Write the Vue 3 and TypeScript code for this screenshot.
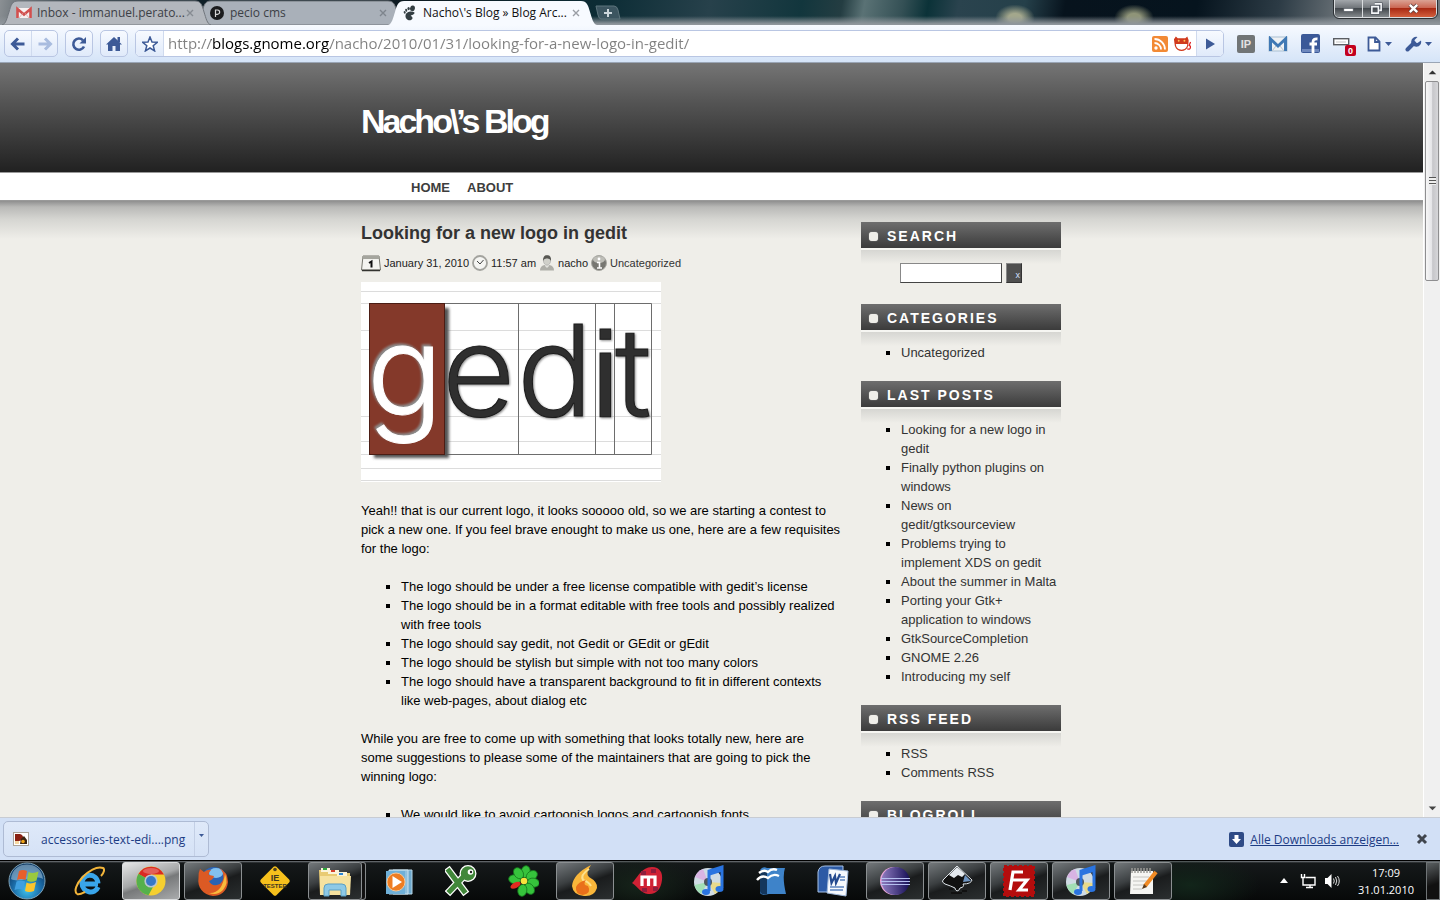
<script setup lang="ts">
import { ref } from 'vue'

interface Link { label: string }
interface Section { title: string; links: Link[] }

const address = ref('http://blogs.gnome.org/nacho/2010/01/31/looking-for-a-new-logo-in-gedit/')
const query = ref('')

const requisites: string[] = [
  'The logo should be under a free license compatible with gedit’s license',
  'The logo should be in a format editable with free tools and possibly realized with free tools',
  'The logo should say gedit, not Gedit or GEdit or gEdit',
  'The logo should be stylish but simple with not too many colors',
  'The logo should have a transparent background to fit in different contexts like web-pages, about dialog etc',
]

const toLinks = (labels: string[]): Link[] => labels.map((label) => ({ label }))

const sections: Section[] = [
  { title: 'Categories', links: toLinks(['Uncategorized']) },
  {
    title: 'Last posts',
    links: toLinks([
      'Looking for a new logo in gedit',
      'Finally python plugins on windows',
      'News on gedit/gtksourceview',
      'Problems trying to implement XDS on gedit',
      'About the summer in Malta',
      'Porting your Gtk+ application to windows',
      'GtkSourceCompletion',
      'GNOME 2.26',
      'Introducing my self',
    ]),
  },
  { title: 'RSS Feed', links: toLinks(['RSS', 'Comments RSS']) },
  { title: 'Blogroll', links: [] },
]

const guides: number[] = [9, 21, 48, 67, 134, 159, 172, 186, 198]
</script>

<template>
  <div class="desktop">
    <header class="titlebar">
      <div class="tabs" role="tablist">
        <button class="tab first" role="tab" type="button">
          <svg class="tab-shape" viewBox="0 0 209 25" preserveAspectRatio="none" aria-hidden="true">
            <path d="M0 25C4 24 5 18 7 12C9 5 10 1 16 1H193C199 1 200 5 202 12C204 18 205 24 209 25Z" fill="#b3b7bd" stroke="#71767d" />
          </svg>
          <svg class="fav" viewBox="0 0 16 16" aria-hidden="true">
            <rect x="1" y="3" width="14" height="10" fill="#f6f0f0" />
            <path d="M1.500 13V4L8 9.500L14.500 4V13" fill="none" stroke="#d2504f" stroke-width="2.600" />
            <path d="M3 13L6.500 8.500M13 13L9.500 8.500" stroke="#e3b5b5" />
          </svg>
          <span class="tab-title">Inbox - immanuel.perato...</span>
          <svg class="tab-x" viewBox="0 0 8 8" aria-hidden="true"><path d="M1 1L7 7M7 1L1 7" stroke="#868b92" stroke-width="1.400" /></svg>
        </button>
        <button class="tab" role="tab" type="button">
          <svg class="tab-shape" viewBox="0 0 209 25" preserveAspectRatio="none" aria-hidden="true">
            <path d="M0 25C4 24 5 18 7 12C9 5 10 1 16 1H193C199 1 200 5 202 12C204 18 205 24 209 25Z" fill="#a9b0b9" stroke="#71767d" />
          </svg>
          <svg class="fav" viewBox="0 0 16 16" aria-hidden="true">
            <circle cx="8" cy="8" r="7" fill="#1b1c1e" />
            <path d="M6.500 12V5H8.500A2 2 0 0 1 8.500 9.300H7" fill="none" stroke="#d5d5d5" stroke-width="1.200" />
          </svg>
          <span class="tab-title">pecio cms</span>
          <svg class="tab-x" viewBox="0 0 8 8" aria-hidden="true"><path d="M1 1L7 7M7 1L1 7" stroke="#7e858d" stroke-width="1.400" /></svg>
        </button>
        <button class="tab active" role="tab" type="button" aria-selected="true">
          <svg class="tab-shape" viewBox="0 0 209 25" preserveAspectRatio="none" aria-hidden="true">
            <path d="M0 25C4 24 5 18 7 12C9 5 10 1 16 1H193C199 1 200 5 202 12C204 18 205 24 209 25Z" fill="#f7faff" />
          </svg>
          <svg class="fav" viewBox="0 0 16 16" aria-hidden="true">
            <g fill="#333e43">
              <ellipse cx="10.500" cy="3.300" rx="2.400" ry="2.900" transform="rotate(14 10.500 3.300)" />
              <ellipse cx="6.600" cy="3.600" rx="1.200" ry="1.700" />
              <ellipse cx="4.200" cy="5.200" rx="1" ry="1.500" transform="rotate(-15 4.200 5.200)" />
              <ellipse cx="2.700" cy="7.400" rx="1" ry="1.300" transform="rotate(-25 2.700 7.400)" />
              <path d="M12.500 7.500C9.500 5.500 4 7 3.500 10.500C3.200 13.800 6 15.700 8.500 15.200C10.600 14.700 11 12.800 10 11.800C9.200 11 8.800 11.300 8.800 10.800C9 9.900 13 9.800 12.500 7.500Z" />
            </g>
          </svg>
          <span class="tab-title">Nacho\'s Blog » Blog Arc...</span>
          <svg class="tab-x" viewBox="0 0 8 8" aria-hidden="true"><path d="M1 1L7 7M7 1L1 7" stroke="#9a9ea5" stroke-width="1.400" /></svg>
        </button>
        <button class="new-tab" type="button" aria-label="New tab">
          <svg viewBox="0 0 26 15" aria-hidden="true">
            <path d="M1 1H19Q22 1 23 5L25 14H6Q4 14 3 10Z" fill="#3c5560" stroke="#5d747c" />
            <path d="M13 4V12M9 8H17" stroke="#ccd6dc" stroke-width="2" />
          </svg>
        </button>
      </div>
      <div class="win-controls">
        <button type="button" class="min" aria-label="Minimize">
          <svg viewBox="0 0 14 14"><rect x="2" y="7" width="10" height="3" fill="#fff" stroke="#555b64" stroke-width=".6" /></svg>
        </button>
        <button type="button" class="max" aria-label="Restore">
          <svg viewBox="0 0 14 14"><path d="M5 2H12V9H10M2 5H9V12H2Z" fill="none" stroke="#444a55" stroke-width="3" /><path d="M5 2H12V9H10M2 5H9V12H2Z" fill="none" stroke="#f4f6f8" stroke-width="1.700" /></svg>
        </button>
        <button type="button" class="close" aria-label="Close">
          <svg viewBox="0 0 14 14"><path d="M3 3L11 11M11 3L3 11" stroke="#5b3a3a" stroke-width="4.200" /><path d="M3 3L11 11M11 3L3 11" stroke="#fff" stroke-width="2.600" /></svg>
        </button>
      </div>
    </header>

    <nav class="toolbar" aria-label="Browser toolbar">
      <div class="tool-group">
        <button type="button" aria-label="Back"><svg class="ico" viewBox="0 0 16 16"><path d="M14.500 8H3M8 2.500L2.500 8L8 13.500" fill="none" stroke="#3d5a97" stroke-width="3" /></svg></button>
        <button type="button" aria-label="Forward"><svg class="ico" viewBox="0 0 16 16"><path d="M1.500 8H13M8 2.500L13.500 8L8 13.500" fill="none" stroke="#a9bcdf" stroke-width="3" /></svg></button>
      </div>
      <div class="tool-group">
        <button type="button" aria-label="Reload"><svg class="ico" viewBox="0 0 16 16"><path d="M13 10.500A5.600 5.600 0 1 1 12 4.300" fill="none" stroke="#3d5a97" stroke-width="2.600" /><path d="M15 1V7.500H8.500Z" fill="#3d5a97" /></svg></button>
      </div>
      <div class="tool-group">
        <button type="button" aria-label="Home"><svg class="ico" viewBox="0 0 16 16"><path d="M8 1L16 8.500H14V15H9.500V10H6.500V15H2V8.500H0Z" fill="#3d5a97" /><rect x="11.500" y="1" width="2.500" height="5" fill="#3d5a97" /></svg></button>
      </div>
      <form class="omnibox" @submit.prevent>
        <button type="button" class="star" aria-label="Bookmark"><svg class="ico" viewBox="0 0 16 16"><path d="M8 1L10 6L15.300 6.300L11.200 9.700L12.600 14.900L8 12L3.400 14.900L4.800 9.700L.7 6.300L6 6Z" fill="#fff" stroke="#3d5a97" stroke-width="1.500" /></svg></button>
        <input v-model="address" class="url" type="text" aria-label="Address" spellcheck="false" />
        <svg class="ico" viewBox="0 0 16 16" aria-hidden="true">
          <rect width="16" height="16" rx="2" fill="#f28a35" />
          <circle cx="4" cy="12" r="1.700" fill="#fff" />
          <path d="M2.500 7A6.500 6.500 0 0 1 9 13.500M2.500 3A10.500 10.500 0 0 1 13 13.500" fill="none" stroke="#fff" stroke-width="1.800" />
        </svg>
        <svg class="devil" viewBox="0 0 20 16" aria-hidden="true">
          <path d="M1 3L3 0L5 2H13L15 0L16.500 4L16 10C14 17 4 17 2 10L1.500 7Z" fill="#d13a1d" />
          <path d="M3 8H15C15 12 12 14 9 14S3 12 3 8Z" fill="#fff" />
          <circle cx="6" cy="4.500" r="1" fill="#ffc05a" /><circle cx="12" cy="4.500" r="1" fill="#ffc05a" />
          <path d="M15 13C19 15 19 10 17 9.500L18.500 6" fill="none" stroke="#d22" stroke-width="1.300" />
        </svg>
        <button type="submit" class="go" aria-label="Go"><svg class="ico" viewBox="0 0 16 16"><path d="M4 2.500L13 8L4 13.500Z" fill="#3d5a97" /></svg></button>
      </form>
      <div class="extensions">
        <button type="button" aria-label="IP">
          <svg width="18" height="18" viewBox="0 0 18 18"><rect width="18" height="18" rx="2" fill="#717576" /><text x="9" y="13" text-anchor="middle" class="badge-ip">IP</text></svg>
        </button>
        <button type="button" aria-label="Mail">
          <svg width="20" height="16" viewBox="0 0 20 16"><rect x="1" y="1" width="18" height="14" fill="#eef1f4" stroke="#a9bfd2" /><path d="M2.500 15V3L10 10L17.500 3V15" fill="none" stroke="#3f78b4" stroke-width="3" /><path d="M4 15L8 10M16 15L12 10" stroke="#b9c2ca" /></svg>
        </button>
        <button type="button" aria-label="Facebook">
          <svg width="19" height="19" viewBox="0 0 19 19"><rect width="19" height="19" rx="2" fill="#3b5998" /><rect x="1" y="15" width="17" height="3" fill="#6f88bd" /><path d="M12 19V8Q12 4.500 16.500 5M8.500 10H16" fill="none" stroke="#fff" stroke-width="2.800" /></svg>
        </button>
        <button type="button" class="counter" aria-label="Counter">
          <svg width="24" height="24" viewBox="0 0 24 24"><rect x=".7" y="6.700" width="15" height="6" fill="#fff" stroke="#5a5d62" stroke-width="1.400" /><rect x="3" y="9" width="10" height="2" fill="#e3e3e3" /><rect x="12" y="13" width="11" height="11" rx="2" fill="#c3001e" /><text x="17.500" y="22" text-anchor="middle" class="badge-count">0</text></svg>
        </button>
        <button type="button" aria-label="Page menu">
          <svg width="25" height="16" viewBox="0 0 25 16"><path d="M1.500 1.500H8.500L12.500 5.500V14.500H1.500ZM8 2V6H12" fill="#fff" stroke="#3d5a97" stroke-width="1.800" /><path d="M18 6H25L21.500 10Z" fill="#3d5a97" /></svg>
        </button>
        <button type="button" aria-label="Tools menu">
          <svg width="27" height="16" viewBox="0 0 27 16"><path d="M2.500 13.500L9 7" stroke="#3d5a97" stroke-width="4" stroke-linecap="round" /><path d="M12.500 1A5 5 0 1 0 16 4.500L12.500 7L10 6.500L9.500 4Z" fill="#3d5a97" /><path d="M20 6H27L23.500 10Z" fill="#3d5a97" /></svg>
        </button>
      </div>
    </nav>

    <div class="viewport">
      <div class="page">
        <div class="banner"><h1>Nacho\’s Blog</h1></div>
        <nav class="menu" aria-label="Site"><div class="menu-in"><a href="#">Home</a><a href="#">About</a></div></nav>
        <div class="backdrop">
          <div class="columns">
            <main>
              <h2><a href="#">Looking for a new logo in gedit</a></h2>
              <p class="meta">
                <svg class="cal" viewBox="0 0 20 17" aria-hidden="true"><path d="M2 1H18L19.500 15H.5Z" fill="#f4f4f0" stroke="#77776f" /><path d="M2 1H18L18.500 4H1.500Z" fill="#a5a59e" /><path d="M1 15.500H19" stroke="#33332f" stroke-width="1.500" /><path d="M8 8L10.500 6.500V12.500" fill="none" stroke="#111" stroke-width="2" /></svg>
                <span>January 31, 2010</span>
                <svg class="m-ico" viewBox="0 0 16 16" aria-hidden="true"><circle cx="8" cy="8" r="7" fill="#f5f5f2" stroke="#a3a39e" stroke-width="1.800" /><path d="M5 6L8 9L11.500 5" fill="none" stroke="#444" /></svg>
                <span>11:57 am</span>
                <svg class="m-ico" viewBox="0 0 16 16" aria-hidden="true"><path d="M1 15.500Q1 10.500 6 10H10Q15 10.500 15 15.500Z" fill="#aeaea8" /><path d="M6 9V11L8 13L10 11V9Z" fill="#e2e2dd" /><ellipse cx="8" cy="5.500" rx="3.600" ry="4.700" fill="#d0d0ca" stroke="#999" stroke-width=".5" /><path d="M4 6Q4 0 8 .3Q12.500 0 12 6Q11 3 8 3.500Q5 3 4 6Z" fill="#575752" /></svg>
                <span>nacho</span>
                <svg class="m-ico" viewBox="0 0 16 16" aria-hidden="true"><circle cx="8" cy="8" r="7.500" fill="#777772" stroke="#a9a9a4" /><ellipse cx="8" cy="4.500" rx="6" ry="3.500" fill="#bdbdb7" /><circle cx="8" cy="4" r="1.400" fill="#fff" /><path d="M6 7.500H8.500V13M6 13H11" fill="none" stroke="#fff" stroke-width="1.600" /></svg>
                <a href="#">Uncategorized</a>
              </p>
              <svg class="gedit" viewBox="0 0 300 200" role="img" aria-label="gedit logo">
                <defs>
                  <filter id="soft" x="-10%" y="-10%" width="130%" height="130%"><feGaussianBlur stdDeviation="1.500" /></filter>
                </defs>
                <rect width="300" height="200" fill="#fff" />
                <path v-for="y in guides" :key="y" :d="`M0 ${y}.5H300`" stroke="#dcdcdc" />
                <path d="M84 21.500H290.500V172.500H84M157.500 21V172M234.500 21V172M253.500 21V172" fill="none" stroke="#6d6d6d" />
                <rect x="13" y="26" width="75" height="150" fill="#555" filter="url(#soft)" />
                <rect x="8.500" y="21.500" width="75" height="151" fill="#84392a" stroke="#4b1d14" />
                <text class="glyph pale" x="6" y="134">g</text>
                <text class="glyph ink" x="81" y="134">e</text>
                <text class="glyph ink" x="156" y="134">d</text>
                <text class="glyph square ink" x="231" y="134">i</text>
                <text class="glyph small ink" x="254" y="134">t</text>
              </svg>
              <p class="para">Yeah!! that is our current logo, it looks sooooo old, so we are starting a contest to pick a new one. If you feel brave enought to make us one, here are a few requisites for the logo:</p>
              <ul class="list"><li v-for="item in requisites" :key="item">{{ item }}</li></ul>
              <p class="para">While you are free to come up with something that looks totally new, here are<br />some suggestions to please some of the maintainers that are going to pick the winning logo:</p>
              <ul class="list"><li>We would like to avoid cartoonish logos and cartoonish fonts</li></ul>
            </main>
            <aside>
              <section>
                <h3><i class="dot"></i><label for="q">Search</label></h3>
                <form class="search" @submit.prevent>
                  <input id="q" v-model="query" type="text" /><button type="submit">x</button>
                </form>
              </section>
              <section v-for="s in sections" :key="s.title">
                <h3><i class="dot"></i><span>{{ s.title }}</span></h3>
                <ul class="list"><li v-for="l in s.links" :key="l.label"><a href="#">{{ l.label }}</a></li></ul>
              </section>
            </aside>
          </div>
        </div>
      </div>
      <div class="scrollbar" role="presentation">
        <svg class="arrow" viewBox="0 0 17 17"><path d="M5 11L9 7L13 11Z" fill="#333" /></svg>
        <div class="thumb"><i></i></div>
        <svg class="arrow down" viewBox="0 0 17 17"><path d="M5 7L9 11L13 7Z" fill="#444" /></svg>
      </div>
    </div>

    <footer class="downloads">
      <div class="download">
        <button type="button" class="file">
          <svg width="16" height="14" viewBox="0 0 16 14" aria-hidden="true"><rect x=".5" y=".5" width="15" height="13" fill="#fff" stroke="#aaa39a" /><path d="M2 2H7Q11 3 10 8L6 9H2Z" fill="#8a2113" /><path d="M8 7L11 4L14 8V12H7Z" fill="#3a2411" /><circle cx="10" cy="9.500" r="1.800" fill="#f0a418" /><path d="M2 9H6V12H2Z" fill="#f6d7a1" /></svg>
          <span>accessories-text-edi....png</span>
        </button>
        <button type="button" class="more" aria-label="Download options"><svg width="7" height="5" viewBox="0 0 7 5"><path d="M1 1H6L3.500 4Z" fill="#3d5a97" /></svg></button>
      </div>
      <div class="all">
        <svg width="15" height="15" viewBox="0 0 15 15" aria-hidden="true"><rect width="15" height="15" rx="2" fill="#2f4b86" /><path d="M5.500 3H9.500V7H12L7.500 12L3 7H5.500Z" fill="#fff" /></svg>
        <a href="#">Alle Downloads anzeigen...</a>
        <button type="button" aria-label="Close"><svg width="12" height="12" viewBox="0 0 12 12"><path d="M2 2L10 10M10 2L2 10" stroke="#40454d" stroke-width="3" /></svg></button>
      </div>
    </footer>

    <div class="taskbar">
      <button type="button" class="start" aria-label="Start">
        <svg width="38" height="38" viewBox="0 0 38 38">
          <defs><radialGradient id="orb" cx=".5" cy=".75" r=".7"><stop offset="0" stop-color="#3fc3ee" /><stop offset=".55" stop-color="#1b6ca8" /><stop offset="1" stop-color="#0c3763" /></radialGradient></defs>
          <circle cx="19" cy="19" r="18" fill="url(#orb)" stroke="#7fa3b8" />
          <path d="M3 17C4 7 11 2.500 19 2.500S34 7 35 17C26 12 12 22 3 17Z" fill="#a9cbe0" opacity=".55" />
          <path d="M11 9Q15 7 19 9L17.500 18Q13 16 9 18Z" fill="#e8602c" /><path d="M20.500 10Q25 12 30.500 9.500L28.500 18.500Q23 21 19 18.500Z" fill="#9bc93e" />
          <path d="M8.500 19.500Q13 17.500 17 19.500L15.500 28Q11.500 26 6.500 28Z" fill="#3f9fe0" /><path d="M18.500 20.500Q22.500 22.500 28 20L26 29Q21 31 17 29Z" fill="#fbc52c" />
        </svg>
      </button>
      <button type="button" class="task" aria-label="Internet Explorer">
        <svg viewBox="0 0 32 32"><path d="M25 19H9M9 19C8 8 24 7 25 18.500M25 22C22 30 9 28 9 18" fill="none" stroke="#39a5ea" stroke-width="5" /><path d="M4 29C-3 23 17 -1 30 3C32 4 31 8 28 11" fill="none" stroke="#f3b53a" stroke-width="2" /><path d="M4 29C7 30 10 28 12 27" fill="none" stroke="#f3b53a" stroke-width="2" /></svg>
      </button>
      <button type="button" class="task run lit" aria-label="Chrome">
        <svg viewBox="0 0 32 32"><circle cx="16" cy="16" r="14.500" fill="#f5cf2f" /><path d="M16 16L3.500 9A14.500 14.500 0 0 1 29 9.500H16Z" fill="#d92a22" /><path d="M3.400 8.700L16 16L18 22L13.500 30.300A14.500 14.500 0 0 1 3.400 8.700Z" fill="#55b04b" /><circle cx="16" cy="16" r="6.600" fill="#b9c5d0" /><circle cx="16" cy="16" r="5" fill="#3777c7" /><ellipse cx="16" cy="6" rx="8" ry="3" fill="#fff" opacity=".25" /></svg>
      </button>
      <button type="button" class="task run" aria-label="Firefox">
        <svg viewBox="0 0 32 32"><circle cx="17" cy="15" r="13" fill="#2a63b5" /><ellipse cx="19" cy="8" rx="7" ry="5" fill="#83c1ee" /><path d="M3 4L7 7Q11 4 14 5Q11 8 12 10L17 11Q16 15 12 16Q14 21 20 20Q28 18 26 8Q25 5 22 3Q31 7 31 17C30 27 23 31 16 31C6 30 0 22 1.500 13Q1 8 3 4Z" fill="#dc5a24" /><path d="M28 9Q32 18 26 25Q20 31 12 28Q25 29 28 9Z" fill="#f9bb3d" /></svg>
      </button>
      <button type="button" class="task" aria-label="IE Tester">
        <svg viewBox="0 0 32 32"><rect x="5" y="5" width="22" height="22" rx="2" transform="rotate(45 16 16)" fill="#f6c01c" /><circle cx="16" cy="4.500" r="1.800" fill="#514320" /><text x="16" y="16" class="ie" text-anchor="middle">IE</text><text x="16" y="23" class="tester" text-anchor="middle">TESTER</text></svg>
      </button>
      <button type="button" class="task run stack" aria-label="Explorer">
        <svg viewBox="0 0 32 32"><path d="M0 5H13L15 8H31V30H1Z" fill="#e9cb73" /><path d="M2 3H11V7H2ZM9 5H20V9H9ZM18 7H28V11H18Z" fill="#fbf4da" /><path d="M4 3H8V5H4Z" fill="#2da83a" /><path d="M12 5H16V7H12Z" fill="#d5402c" /><path d="M20 8H24V10H20Z" fill="#2c86d5" /><path d="M1 11H32L31 30H1Z" fill="#f6e2a0" /><path d="M5 31V23Q5 19 9 19H23Q27 19 27 23V31H22V25H10V31Z" fill="#8dc9e6" stroke="#5b9fc4" /></svg>
      </button>
      <button type="button" class="task" aria-label="Media Player">
        <svg viewBox="0 0 32 32"><path d="M10 5H29V29H10Z" fill="#6ea9cd" stroke="#b8d7e8" /><path d="M6 5H25V29H6Z" fill="#8fc0dd" stroke="#cde3ef" /><path d="M3 6H22V29H3Z" fill="#6fb0d8" /><circle cx="13" cy="17" r="9" fill="#ee7d22" stroke="#f8c794" /><path d="M9.500 11L19 17L9.500 23Z" fill="#fff" /></svg>
      </button>
      <button type="button" class="task" aria-label="XMind">
        <svg viewBox="0 0 32 32"><g stroke-linecap="square" fill="none"><path d="M4 6L19 26M5 26L20 10" stroke="#fff" stroke-width="7.500" /><circle cx="23" cy="8.500" r="6" stroke="#fff" stroke-width="5" /><path d="M4 6L19 26M5 26L20 10" stroke="#41873a" stroke-width="5" /></g><circle cx="23" cy="8.500" r="7.200" fill="#41873a" /><circle cx="25.500" cy="7" r="2.800" fill="#fff" /><circle cx="26" cy="7" r="1.200" fill="#222" /></svg>
      </button>
      <button type="button" class="task" aria-label="ICQ">
        <svg viewBox="0 0 32 32"><g fill="#36c33c" stroke="#16791d" stroke-width=".8"><ellipse v-for="a in [0, 45, 90, 135, 180, 270, 315]" :key="a" cx="17" cy="6.500" rx="4.500" ry="6" :transform="`rotate(${a + 10} 17 16)`" /></g><ellipse cx="17" cy="6.500" rx="2.800" ry="5.500" transform="rotate(243 17 16)" fill="#e12b20" /><circle cx="17" cy="16" r="3.300" fill="#f8e23c" /></svg>
      </button>
      <button type="button" class="task run" aria-label="Burner">
        <svg viewBox="0 0 32 32"><path d="M22 0Q16 8 20 12Q29 17 28 23Q25 32 15 31Q4 30 3 21Q4 9 22 0Z" fill="#f9b63a" /><path d="M20 4Q11 10 14 15Q20 17 22 21" fill="none" stroke="#fde08c" stroke-width="2" /><path d="M17 15Q13 20 19 21Q23 28 14 30Q6 29 7 22Q9 17 17 15Z" fill="#e9701b" /></svg>
      </button>
      <button type="button" class="task" aria-label="Miro">
        <svg viewBox="0 0 32 32"><path d="M1 18C6 14 10 2 21 2C29 2 32 8 31 15C30 24 25 30 17 29C10 28 7 22 1 18Z" fill="#d02134" /><path d="M10 6H15V10H10ZM20 4H25V8H20ZM11 23H16V27H11ZM22 22H27V26H22Z" fill="#8f1d3c" /><path d="M11 21V12H24V21M17.500 12V21" fill="none" stroke="#fff" stroke-width="3.200" /></svg>
      </button>
      <button type="button" class="task" aria-label="iTunes">
        <svg viewBox="0 0 32 32"><circle cx="15" cy="17" r="14" fill="#cfdbe4" /><path d="M15 17L2 12A14 14 0 0 1 10 4Z" fill="#d9b4e3" /><path d="M15 17L1.500 20A14 14 0 0 0 8 29Z" fill="#a2dfb5" /><path d="M15 17L22 29A14 14 0 0 0 29 18Z" fill="#e8d98b" /><circle cx="15" cy="17" r="4" fill="#50575d" /><path d="M16 26V6L29 2V23" fill="none" stroke="#2a74e0" stroke-width="3" /><path d="M16 8L29 4" stroke="#2a74e0" stroke-width="5" /><ellipse cx="13" cy="27" rx="4" ry="3" fill="#2a74e0" /><ellipse cx="26.500" cy="24" rx="4" ry="3" fill="#2a74e0" /></svg>
      </button>
      <button type="button" class="task" aria-label="OpenOffice">
        <svg viewBox="0 0 32 32"><path d="M5 5Q8 1 12 3H30Q27 12 31 29H14Q5 31 5 27Z" fill="#3e83c9" /><path d="M5 5H12V29Q5 30 5 26Z" fill="#14365c" /><path d="M2 15Q7 9 13 13Q18 8 24 11M4 8Q9 4 13 7Q17 3 22 5" fill="none" stroke="#fff" stroke-width="2.400" /></svg>
      </button>
      <button type="button" class="task" aria-label="Word">
        <svg viewBox="0 0 32 32"><path d="M1 7Q2 1 8 1H26V27H1Z" fill="#2c5aa5" stroke="#a8c3e8" /><path d="M12 4L31 6L29 31L10 28Z" fill="#f6f9fd" stroke="#9db6d8" /><path d="M13 9L14.500 18L18 11L19 18L23 9" fill="none" stroke="#23498f" stroke-width="2.200" /><path d="M23 12H28M23 15H28M13 22H27M13 25H26" stroke="#5b83bf" stroke-width="1.500" /></svg>
      </button>
      <button type="button" class="task run" aria-label="Eclipse">
        <svg viewBox="0 0 32 32"><defs><linearGradient id="ecl"><stop offset="0" stop-color="#8f7cc0" /><stop offset="1" stop-color="#171057" /></linearGradient></defs><circle cx="15" cy="16" r="14" fill="#e7a5d8" /><circle cx="16.500" cy="16" r="14" fill="url(#ecl)" /><path d="M2 13.500H31M2 16.500H31M2 19.500H31" stroke="#b6c0f0" stroke-width="1.200" /></svg>
      </button>
      <button type="button" class="task run" aria-label="Inkscape">
        <svg viewBox="0 0 32 32"><path d="M16 1L31 15Q30 19 22 19Q24 22 19 23Q18 26 16 26Q14 25 14 23Q10 21 4 19Q0 17 2 15Z" fill="#111" stroke="#dfe5ea" /><path d="M16 2L24 9L21 12L17 10L13 13L8 10Z" fill="#e4e9ee" /><path d="M24 10L30 16L22 17Z" fill="#6f95c2" /><path d="M8 24H12M21 26H26M10 28H21" stroke="#111" stroke-width="2" /></svg>
      </button>
      <button type="button" class="task run" aria-label="FileZilla">
        <svg viewBox="0 0 32 32"><rect x="1" y="1" width="30" height="30" fill="#b40d0d" stroke="#b40d0d" stroke-width="2" stroke-dasharray="3 2" /><path d="M7 25L10 7H20M8 15H17M16 15H24L16 25H25" fill="none" stroke="#fff" stroke-width="3.200" /></svg>
      </button>
      <button type="button" class="task run" aria-label="Music">
        <svg viewBox="0 0 32 32"><circle cx="15" cy="17" r="14" fill="#cfdbe4" /><path d="M15 17L2 12A14 14 0 0 1 10 4Z" fill="#d9b4e3" /><path d="M15 17L1.500 20A14 14 0 0 0 8 29Z" fill="#a2dfb5" /><path d="M15 17L22 29A14 14 0 0 0 29 18Z" fill="#e8d98b" /><circle cx="15" cy="17" r="4" fill="#50575d" /><path d="M16 26V6L29 2V23" fill="none" stroke="#2a74e0" stroke-width="3" /><path d="M16 8L29 4" stroke="#2a74e0" stroke-width="5" /><ellipse cx="13" cy="27" rx="4" ry="3" fill="#2a74e0" /><ellipse cx="26.500" cy="24" rx="4" ry="3" fill="#2a74e0" /></svg>
      </button>
      <button type="button" class="task run" aria-label="Editor">
        <svg viewBox="0 0 32 32"><path d="M4 6H26V29H3Z" fill="#f5f5f2" /><path d="M5 3V8M8 3V8M11 3V8M14 3V8M17 3V8M20 3V8M23 3V8" stroke="#9a9a96" stroke-width="1.500" /><path d="M6 12H22M6 16H20M6 20H17M6 24H15" stroke="#c4c4c0" /><path d="M29 7L18 21" stroke="#f08a24" stroke-width="4" /><path d="M17 19L20 22L15 24Z" fill="#5a3b1c" /></svg>
      </button>
      <div class="tray">
        <svg width="8" height="5" viewBox="0 0 8 5" aria-hidden="true"><path d="M0 5L4 0L8 5Z" fill="#fff" /></svg>
        <svg class="ico" viewBox="0 0 16 16" aria-hidden="true"><path d="M5.500 4.500H15V12H5M10 12V14.500M6 14.500H13M3 6V12H5M1.500 1V4.500H4.500V1M3 4.500V6" fill="none" stroke="#fff" stroke-width="1.400" /></svg>
        <svg class="ico" viewBox="0 0 16 16" aria-hidden="true"><path d="M1 5H3.500L7.500 1V15L3.500 11H1Z" fill="#fff" /><path d="M9.500 5.500Q11 8 9.500 10.500M11.500 4Q14 8 11.500 12M13.500 3Q17 8 13.500 13" fill="none" stroke="#ddd" /></svg>
        <div class="clock"><span>17:09</span><span>31.01.2010</span></div>
      </div>
      <button type="button" class="peek" aria-label="Show desktop"></button>
    </div>
  </div>
</template>

<style>
html, body { margin: 0; background: #000; }
</style>

<style scoped>
* { box-sizing: border-box; }
.desktop {
  display: flex;
  flex-direction: column;
  height: 100vh;
  overflow: hidden;
  font-family: "Open Sans", "Noto Sans", sans-serif;
  font-size: 12px;
}
button { font: inherit; color: inherit; padding: 0; margin: 0; border: 0; background: none; display: flex; align-items: center; justify-content: center; }
svg { display: block; flex: none; }
.ico { width: 16px; height: 16px; }

.titlebar {
  display: flex;
  justify-content: space-between;
  align-items: flex-start;
  height: 25px;
  flex: none;
  background:
    linear-gradient(to bottom, transparent 16px, #8f969c 24px),
    radial-gradient(ellipse 22px 15px at 1015px 18px, #a3a78c 30%, rgba(163, 167, 140, 0) 90%),
    radial-gradient(ellipse 22px 15px at 1134px 18px, #8f9478 30%, rgba(143, 148, 120, 0) 90%),
    linear-gradient(100deg, #8b9094 0, #10222b 80px, #0d1a22 400px, #0d2d36 600px, #27414b 700px, #12363d 790px, #243d42 830px, #5a7275 852px, #345055 890px, #0b3238 915px, #2a434e 945px, #25404a 1010px, #07131d 1050px, #06141e 1180px, #2c3b45 1260px, #70777c 1330px);
}
.tabs { display: flex; padding-left: 2px; height: 25px; }
.tab { position: relative; width: 209px; height: 25px; padding: 0 17px 0 14px; gap: 5px; margin-right: -16px; color: #3c4046; }
.tab.first { z-index: 1; }
.tab.active { z-index: 2; color: #111; }
.tab-shape { position: absolute; inset: 0; width: 100%; height: 100%; }
.fav { position: relative; width: 16px; height: 16px; }
.tab-title { position: relative; flex: 1; min-width: 0; text-align: left; white-space: nowrap; }
.tab-x { position: relative; width: 8px; height: 8px; }
.new-tab { margin-left: 14px; width: 26px; height: 25px; }
.new-tab svg { width: 26px; height: 15px; }
.win-controls { display: flex; margin-right: 3px; border: 1px solid #d9dcdf; border-top: 0; border-radius: 0 0 5px 5px; outline: 1px solid #2c3034; }
.win-controls button { height: 17px; width: 27px; background: linear-gradient(#a3a7ab, #6b7075 50%, #43484d 50%, #83888c); border-right: 1px solid #d9dcdf; }
.win-controls svg { width: 13px; height: 13px; }
.win-controls .min { width: 28px; border-bottom-left-radius: 4px; }
.win-controls .close { width: 46px; border: 0; background: linear-gradient(#dba294, #c9604c 50%, #a92a14 50%, #d35f3d); border-bottom-right-radius: 4px; }

.toolbar { display: flex; align-items: center; flex: none; height: 38px; padding: 0 8px 0 4px; background: linear-gradient(#f7faff, #d5e4f8); border-bottom: 1px solid #9aa5b5; }
.tool-group { display: flex; height: 27px; margin-right: 7px; border: 1px solid #b9c6e3; border-radius: 5px; background: linear-gradient(#f7faff, #e0eafa); }
.tool-group button { width: 26px; }
.tool-group button + button { border-left: 1px solid #cfdaee; }
.omnibox { display: flex; flex: 1; align-items: center; height: 27px; border: 1px solid #b9c6e3; border-radius: 5px; background: #fff; overflow: hidden; }
.star { width: 28px; height: 100%; border-right: 1px solid #cfdaee; background: linear-gradient(#f7faff, #e0eafa); }
.url {
  flex: 1;
  min-width: 0;
  height: 25px;
  padding: 0 0 0 4px;
  border: 0;
  outline: 0;
  font: 15px/25px "Open Sans", "Noto Sans", sans-serif;
  background: linear-gradient(to right, #808080 47px, #000 47px, #000 166px, #808080 166px);
  -webkit-background-clip: text;
  background-clip: text;
  color: transparent;
}
.devil { width: 19px; height: 16px; margin: 0 4px 0 5px; }
.go { width: 27px; height: 100%; border-left: 1px solid #cfdaee; background: linear-gradient(#f7faff, #e0eafa); }
.extensions { display: flex; align-items: center; gap: 13px; margin-left: 13px; }
.counter { margin-right: -3px; }
.badge-ip { font: bold 11px "Liberation Sans", sans-serif; fill: #e2e2e2; }
.badge-count { font: bold 9px "Liberation Sans", sans-serif; fill: #fff; }

.viewport { display: flex; flex: 1; min-height: 0; overflow: hidden; border-bottom: 1px solid #c8ccd3; }
.page { flex: 1; min-width: 0; overflow: hidden; background: #efeee9; font: 13px/19px "Liberation Sans", Arial, sans-serif; color: #000; }
.banner { height: 109px; background: linear-gradient(#757575, #555 35%, #212121); }
.banner h1 { max-width: 701px; margin: 0 auto; padding-top: 38px; font-size: 34px; line-height: 40px; letter-spacing: -3px; color: #fff; }
.menu { height: 29px; background: #fff; border-top: 1px solid #999; border-bottom: 1px solid #999; }
.menu-in { display: flex; gap: 17px; max-width: 701px; margin: 0 auto; padding-left: 50px; line-height: 29px; }
.menu a { color: #3d3d3d; font-weight: bold; text-transform: uppercase; text-decoration: none; }
.backdrop { padding-top: 21px; background: linear-gradient(#8f8f8f, #b9b9b7 6px, #d5d5d1 18px, #efeee9 38px) no-repeat; }
.columns { display: grid; grid-template-columns: 480px 200px; column-gap: 20px; max-width: 701px; margin: 0 auto; align-items: start; }
h2 { margin: 0; font-size: 18px; line-height: 22px; }
h2 a, .meta a, aside a { color: #333; text-decoration: none; }
.meta { display: flex; align-items: center; gap: 3px; height: 20px; margin: 9px 0; font-size: 11px; color: #222; }
.cal { width: 20px; height: 17px; }
.m-ico { width: 16px; height: 16px; }
.gedit { width: 300px; height: 200px; margin-bottom: 19px; }
.glyph { font: 300 126px Inter, "Liberation Sans", sans-serif; }
.glyph.small { font-size: 122px; }
.glyph.square { font: 120px "Liberation Sans", sans-serif; }
.pale { fill: #fff; stroke: #fff; filter: drop-shadow(-2px -2px 1px #8d8d8d); }
.ink { fill: #2f2f2f; stroke: #1c1c1c; filter: drop-shadow(1px 1px 1px #888); }
.para { margin: 0 0 19px; }
.list { margin: 0 0 19px; padding: 0 0 0 40px; list-style: square; }
h3 {
  display: flex;
  align-items: center;
  gap: 9px;
  height: 26px;
  margin: 0;
  padding: 2px 0 0 8px;
  font-size: 14px;
  line-height: 24px;
  letter-spacing: 2px;
  text-transform: uppercase;
  color: #fff;
  background: linear-gradient(#6e6e6e, #3b3b3b);
}
.dot { width: 9px; height: 9px; border-radius: 3px; background: #efeee9; box-shadow: 0 0 1px #ccc; }
aside .list, .search { padding-top: 13px; border-top: 2px solid #f6f6f2; background: linear-gradient(#d6d6d2, #efeee9 14px) no-repeat; }
aside .list { padding-top: 11px; }
aside li::marker { color: #000; }
.search { display: flex; gap: 4px; height: 56px; padding-left: 39px; }
.search input { width: 102px; height: 20px; border: 1px solid #444; border-top-color: #888; border-left-color: #888; background: #fff; }
.search button { width: 16px; height: 20px; overflow: hidden; justify-content: flex-end; padding: 3px 1px 0 0; font-size: 9px; line-height: 12px; color: #cfe0ff; background: #4f4f4f; border: 1px solid #333; border-top-color: #888; border-left-color: #888; }

.scrollbar { display: flex; flex-direction: column; flex: none; width: 17px; background: #f0f0f0; border-left: 1px solid #fff; }
.arrow { width: 16px; height: 18px; }
.arrow.down { margin-top: auto; }
.thumb { display: flex; align-items: center; justify-content: center; height: 200px; margin: 0 1px; border: 1px solid #8e8e90; border-radius: 2px; background: linear-gradient(to right, #f7f7f7, #e4e4e7 50%, #c6c6ca 55%, #d6d6d9); }
.thumb i { width: 7px; height: 8px; background: repeating-linear-gradient(#555 0 1px, #eee 1px 3px); }

.downloads { display: flex; justify-content: space-between; align-items: center; flex: none; height: 42px; padding: 0 12px 0 3px; background: #d2e0f6; color: #1c3c84; }
.download { display: flex; height: 36px; border: 1px solid #aebbd4; border-radius: 5px; background: linear-gradient(#dfe9f9, #d5e2f6); }
.file { width: 191px; padding-left: 9px; justify-content: flex-start; gap: 12px; border-right: 1px solid #c3cfe5; }
.more { width: 13px; padding-bottom: 8px; }
.all { display: flex; align-items: center; gap: 6px; }
.all a { color: #1c3c84; text-decoration: underline; }
.all button { margin-left: 11px; }

.taskbar { display: flex; align-items: center; flex: none; height: 40px; background: radial-gradient(ellipse 70px 30px at 1190px 24px, #12251a, transparent), radial-gradient(ellipse 60px 30px at 640px 24px, #16241a, transparent), linear-gradient(#777c80 0, #15191a 2px, #070909); border-top: 1px solid #000; color: #fff; }
.start { width: 54px; height: 39px; margin-right: 6px; }
.task { width: 58px; height: 38px; margin-right: 4px; border: 1px solid transparent; border-radius: 3px; }
.task svg { width: 32px; height: 32px; }
.task.run { border-color: #8b8f91; background: linear-gradient(160deg, #73787b 0, #3b3f41 40%, #1a1c1d 55%, #2b2f30); }
.task.lit { border-color: #d9dbdc; background: linear-gradient(160deg, #e6e7e7 0, #a6a8a9 45%, #77797a 55%, #a9abac); }
.task.stack { width: 54px; margin-right: 8px; box-shadow: 4px 0 0 -1px #111, 4px 0 0 0 #85898b; }
.ie { font: bold 9px "Liberation Sans", sans-serif; fill: #3d3522; }
.tester { font: bold 6px "Liberation Sans", sans-serif; fill: #3d3522; }
.tray { display: flex; align-items: center; gap: 8px; margin-left: auto; padding-right: 12px; }
.tray svg:first-child { margin-right: 4px; }
.clock { display: flex; flex-direction: column; align-items: center; margin-left: 10px; font-size: 11px; line-height: 17px; }
.peek { width: 14px; height: 38px; border: 1px solid #6f7476; background: linear-gradient(160deg, #5a5f61, #111 60%); }
</style>
